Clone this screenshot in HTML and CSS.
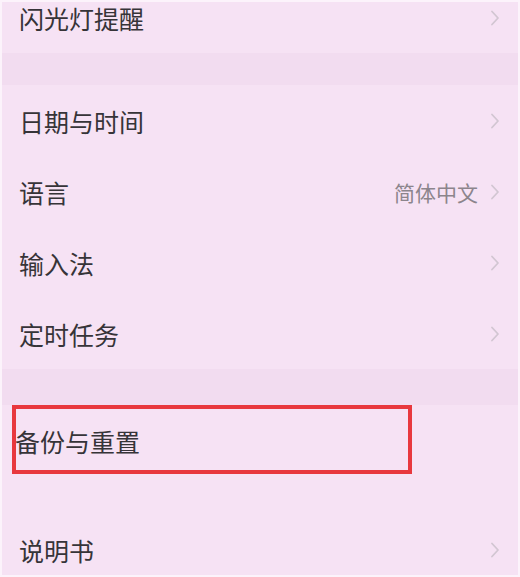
FILE: index.html
```html
<!DOCTYPE html>
<html lang="zh-CN">
<head>
  <meta charset="UTF-8">
  <meta name="viewport" content="width=device-width, initial-scale=1.0">
  <title>设置</title>
  <link rel="stylesheet" href="styles.css">
</head>
<body>
  <div class="screen">
    <div class="list first">
      <div class="item">
        <span class="label">闪光灯提醒</span>
        <span class="arrow"><svg width="10" height="16" viewBox="0 0 10 16"><path d="M2 1.5 L8 8 L2 14.5" /></svg></span>
      </div>
    </div>

    <div class="gap"></div>

    <div class="list">
      <div class="item">
        <span class="label">日期与时间</span>
        <span class="arrow"><svg width="10" height="16" viewBox="0 0 10 16"><path d="M2 1.5 L8 8 L2 14.5" /></svg></span>
      </div>
      <div class="item">
        <span class="label">语言</span>
        <span class="value">简体中文</span>
        <span class="arrow"><svg width="10" height="16" viewBox="0 0 10 16"><path d="M2 1.5 L8 8 L2 14.5" /></svg></span>
      </div>
      <div class="item">
        <span class="label">输入法</span>
        <span class="arrow"><svg width="10" height="16" viewBox="0 0 10 16"><path d="M2 1.5 L8 8 L2 14.5" /></svg></span>
      </div>
      <div class="item">
        <span class="label">定时任务</span>
        <span class="arrow"><svg width="10" height="16" viewBox="0 0 10 16"><path d="M2 1.5 L8 8 L2 14.5" /></svg></span>
      </div>
    </div>

    <div class="gap wide"></div>

    <div class="list">
      <div class="item marked">
        <span class="label">备份与重置</span>
        <div class="highlight"></div>
      </div>
    </div>

    <div class="gap wider"></div>

    <div class="list">
      <div class="item">
        <span class="label">说明书</span>
        <span class="arrow"><svg width="10" height="16" viewBox="0 0 10 16"><path d="M2 1.5 L8 8 L2 14.5" /></svg></span>
      </div>
    </div>
  </div>
</body>
</html>
```

FILE: styles.css
```css
:root {
  --background-color: #f6e2f4;
  --gap-color: #f2dcf0;
  --text-color: #363438;
  --value-color: #8c858c;
  --arrow-color: #d2c6d2;
  --mark-color: #e8383e;
}

html,
body {
  margin: 0;
  padding: 0;
}

body {
  background-color: #fcf3fb;
  font-family: "Noto Sans CJK SC", "Noto Sans", sans-serif;
  color: var(--text-color);
}

.screen {
  height: 573px;
  margin: 2px;
  background-color: var(--background-color);
  overflow: hidden;
}

.list.first {
  margin-top: -20px;
}

.item {
  position: relative;
  display: flex;
  align-items: center;
  height: 71px;
  padding: 0 18px 0 17px;
}

.label {
  flex-grow: 1;
  font-size: 25px;
  line-height: 1.2;
}

.value {
  font-size: 21px;
  color: var(--value-color);
  margin-right: 12px;
}

.arrow {
  display: flex;
  align-items: center;
}

.arrow path {
  fill: none;
  stroke: var(--arrow-color);
  stroke-width: 1.8;
  stroke-linecap: round;
  stroke-linejoin: round;
}

.gap {
  height: 32px;
  background-color: var(--gap-color);
}

.gap.wide {
  height: 36px;
}

.gap.wider {
  height: 38px;
  background-color: var(--background-color);
}

.item.marked {
  padding-left: 13px;
}

.highlight {
  position: absolute;
  left: 10px;
  top: 0;
  width: 392px;
  height: 61px;
  border: 4px solid var(--mark-color);
}
```
